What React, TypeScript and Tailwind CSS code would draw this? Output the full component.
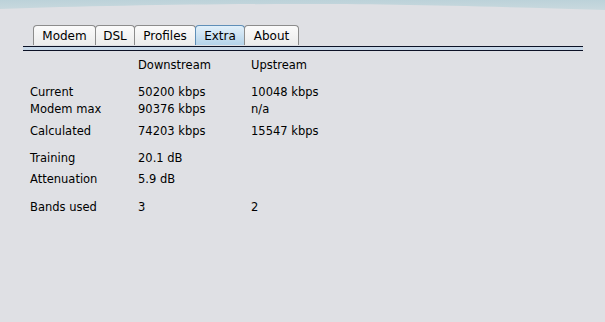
import React from 'react';

const rows: { label: string; down: string; up: string; mt: string }[] = [
  { label: 'Current', down: '50200 kbps', up: '10048 kbps', mt: 'mt-[10px]' },
  { label: 'Modem max', down: '90376 kbps', up: 'n/a', mt: 'mt-0' },
  { label: 'Calculated', down: '74203 kbps', up: '15547 kbps', mt: 'mt-[5px]' },
  { label: 'Training', down: '20.1 dB', up: '', mt: 'mt-[10px]' },
  { label: 'Attenuation', down: '5.9 dB', up: '', mt: 'mt-[4px]' },
  { label: 'Bands used', down: '3', up: '2', mt: 'mt-[11px]' },
];

const tabs: { name: string; w: string }[] = [
  { name: 'Modem', w: 'w-[63px]' },
  { name: 'DSL', w: 'w-[40px]' },
  { name: 'Profiles', w: 'w-[62px]' },
  { name: 'Extra', w: 'w-[50px]' },
  { name: 'About', w: 'w-[55px]' },
];

export default function App() {
  return (
    <div className="relative w-[605px] h-[322px] overflow-hidden bg-[#dfe0e4] text-black font-['DejaVu_Sans',sans-serif]">
      {/* window top wave */}
      <svg className="absolute left-0 top-0" width="605" height="14" viewBox="0 0 605 14">
        <defs>
          <linearGradient id="wave" x1="0" y1="0" x2="0" y2="1">
            <stop offset="0" stopColor="#bcd2d9" />
            <stop offset="1" stopColor="#c9d9de" />
          </linearGradient>
        </defs>
        <path d="M0 0 H605 V10 C480 6 380 4 300 4 C200 4 90 6 0 9 Z" fill="url(#wave)" />
      </svg>

      <div className="pt-[25px] pl-[23px] w-[583px]">
        {/* Tabs */}
        <div className="flex pl-[10px] h-[20px] items-end">
          {tabs.map((t) => (
            <div
              key={t.name}
              className={
                t.name === 'Extra'
                  ? `${t.w} h-[20px] flex items-center justify-center text-[12px] rounded-t-[4px] border border-b-0 border-[#5f8fb8] bg-gradient-to-b from-[#e2f0fa] to-[#b4d3ea] -ml-px`
                  : `${t.w} h-[20px] flex items-center justify-center text-[12px] rounded-t-[4px] border border-b-0 border-[#8c8c8c] bg-gradient-to-b from-[#fbfbfb] to-[#ececec] -ml-px first:ml-0`
              }
            >
              {t.name}
            </div>
          ))}
        </div>
        {/* double rule */}
        <div className="h-[5px] border-t-[1.5px] border-b-[1.5px] border-[#0c1226] bg-[#c8d8e8] mt-[1px]" />

        {/* Data table */}
        <div className="pl-[7px] text-[11.5px] leading-[17px]">
          <div className="flex mt-[6px]">
            <div className="w-[108px]" />
            <div className="w-[113px]">Downstream</div>
            <div>Upstream</div>
          </div>
          {rows.map((r) => (
            <div key={r.label} className={`flex ${r.mt}`}>
              <div className="w-[108px]">{r.label}</div>
              <div className="w-[113px]">{r.down}</div>
              <div>{r.up}</div>
            </div>
          ))}
        </div>
      </div>
    </div>
  );
}
